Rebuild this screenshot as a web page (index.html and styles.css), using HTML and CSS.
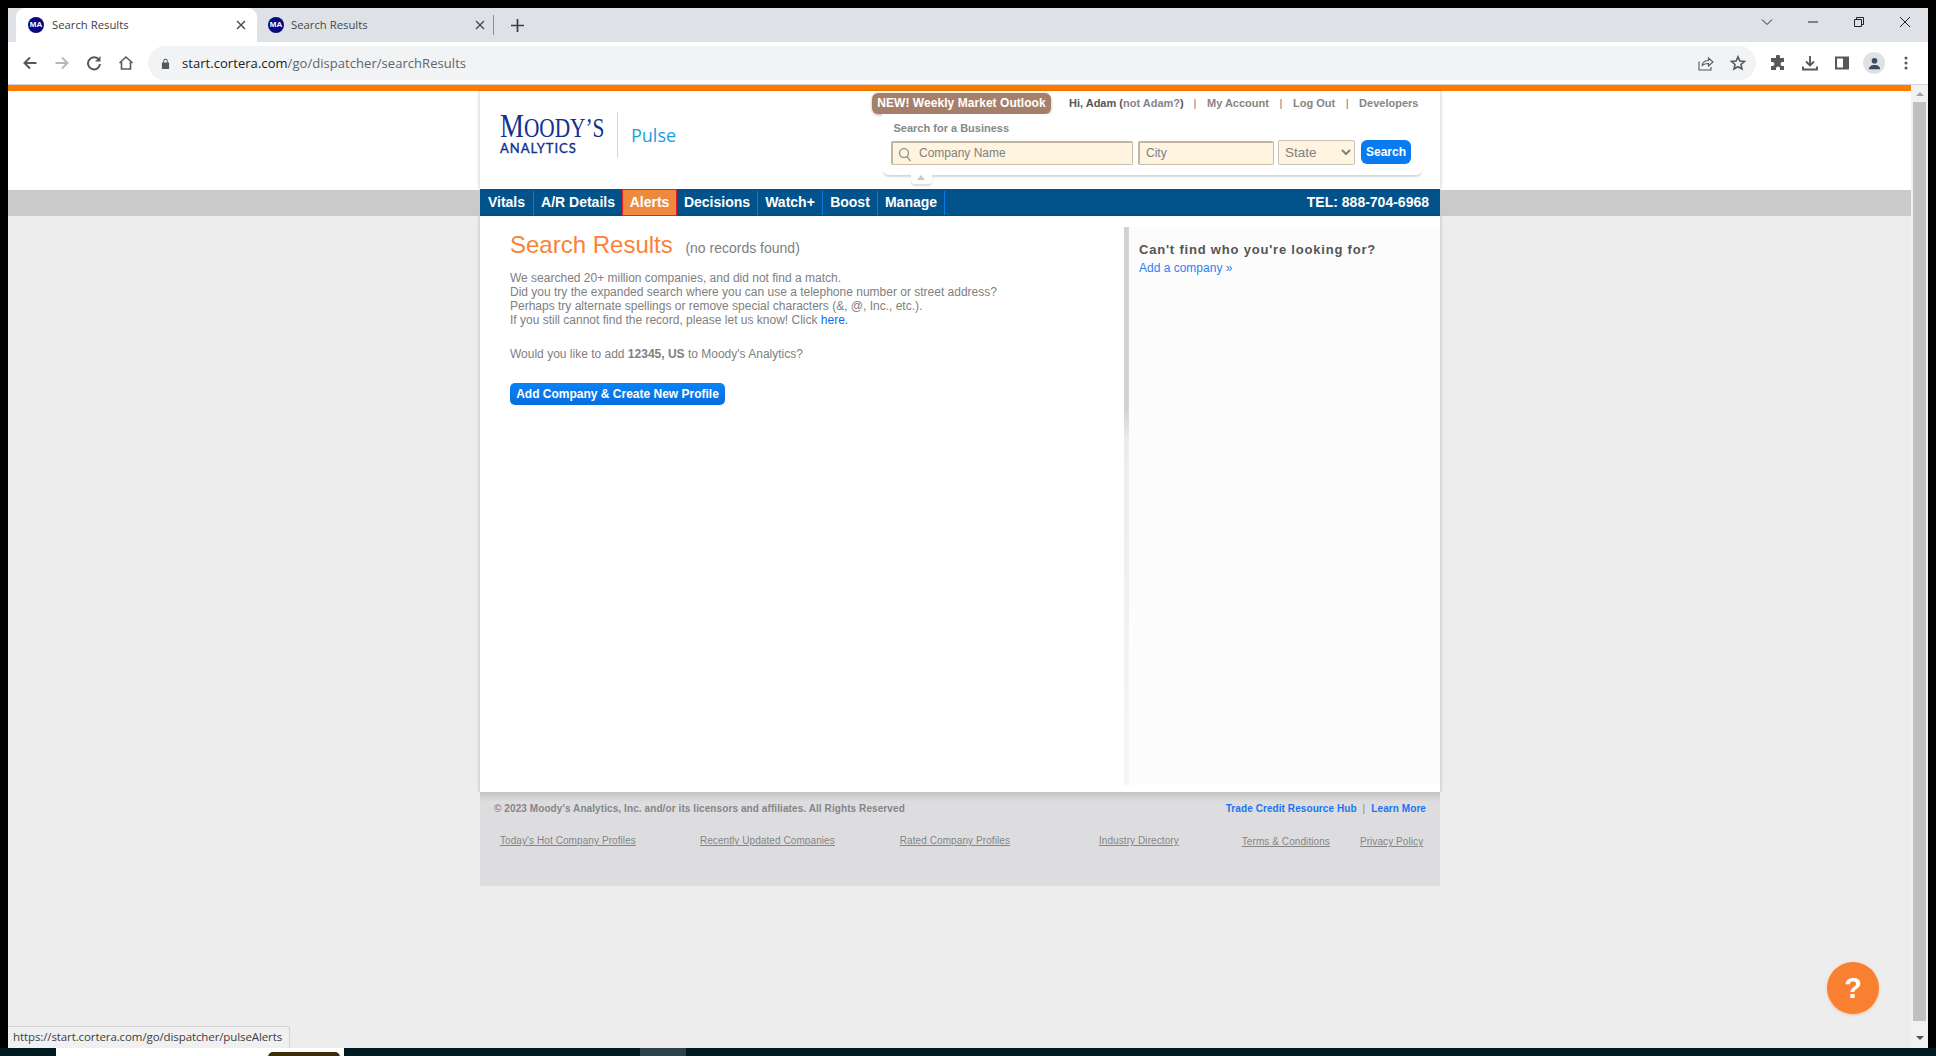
FILE: index.html
```html
<!DOCTYPE html>
<html lang="en">
<head>
<meta charset="utf-8">
<title>Search Results</title>
<link rel="stylesheet" href="styles.css">
</head>
<body>
<div class="window">
  <div class="tabstrip">
    <div class="tab tab-active">
      <span class="favicon">MA</span><span class="tab-title">Search Results</span>
      <svg class="tab-close" viewBox="0 0 10 10"><path d="M1 1l8 8M9 1l-8 8"/></svg>
    </div>
    <div class="tab tab-bg">
      <span class="favicon">MA</span><span class="tab-title">Search Results</span>
      <svg class="tab-close" viewBox="0 0 10 10"><path d="M1 1l8 8M9 1l-8 8"/></svg>
    </div>
    <span class="tab-sep"></span>
    <svg class="newtab" viewBox="0 0 12 12"><path d="M6 0v12M0 6h12"/></svg>
    <div class="winctl">
      <svg viewBox="0 0 12 12" class="wc"><path d="M1 3.5l5 5 5-5" fill="none"/></svg>
      <svg viewBox="0 0 12 12" class="wc"><path d="M1 6h10"/></svg>
      <svg viewBox="0 0 12 12" class="wc"><path d="M1.5 3.5h7v7h-7zM3.5 3.5v-2h7v7h-2" fill="none"/></svg>
      <svg viewBox="0 0 12 12" class="wc"><path d="M1 1l10 10M11 1L1 11"/></svg>
    </div>
  </div>

  <div class="toolbar">
    <svg class="ti ti-back" viewBox="0 0 16 16"><path class="s" d="M14.5 8H2.5M8 2.5L2.5 8 8 13.5"/></svg>
    <svg class="ti ti-fwd" viewBox="0 0 16 16"><path class="s faint" d="M1.5 8h12M8 2.5L13.5 8 8 13.5"/></svg>
    <svg class="ti ti-reload" viewBox="0 0 16 16"><path class="s" d="M13 5A6 6 0 1 0 14 9"/><path class="f" d="M14.5 1v5.5H9z"/></svg>
    <svg class="ti ti-home" viewBox="0 0 16 16"><path class="s thin" d="M1.5 8L8 2l6.500 6M3.500 7v7h9V7"/></svg>
    <div class="omnibox">
      <svg class="lock" viewBox="0 0 10 12"><path class="f" d="M1 5h8v7H1zM2.500 5V3.200a2.500 2.500 0 0 1 5 0V5H6.500V3.200a1.500 1.500 0 0 0-3 0V5z"/></svg>
      <span class="url"><span class="url-host">start.cortera.com</span>/go/dispatcher/searchResults</span>
      <svg class="om-ico om-share" viewBox="0 0 16 16"><path class="s thin1" d="M1 6.500V15h12v-3"/><path class="s thin1" d="M4 11c.5-3.500 3-5.500 6.500-5.500V3L15 7l-4.500 4V8.500C8 8.500 5.500 9 4 11z"/></svg>
      <svg class="om-ico om-star" viewBox="0 0 16 16"><path class="s thin" d="M8 1.800l1.900 4.200 4.500.5-3.400 3 1 4.500L8 11.700 4 14l1-4.500-3.400-3 4.500-.5z"/></svg>
    </div>
    <svg class="ti2" viewBox="0 0 16 16"><path class="f" d="M6 1.500a2 2 0 0 1 4 0V3h4v4h-1.500a2 2 0 0 0 0 4H14v4h-4v-1.500a2 2 0 0 0-4 0V15H1v-4h1.500a2 2 0 0 0 0-4H1V3h5z"/></svg>
    <svg class="ti2" viewBox="0 0 16 16"><path class="s dl" d="M8 1v9M4 6.500L8 10.500l4-4M1 11.500v3h14v-3"/></svg>
    <svg class="ti2" viewBox="0 0 16 16"><path class="f" fill-rule="evenodd" d="M1 1.500h14v13H1zM3 3.500v9h6v-9z"/></svg>
    <span class="avatar"><svg viewBox="0 0 16 16"><circle class="f" cx="8" cy="5" r="3"/><path class="f" d="M2 14c0-3 3-4.500 6-4.500s6 1.500 6 4.500z"/></svg></span>
    <svg class="ti2" viewBox="0 0 16 16"><circle class="f" cx="8" cy="3" r="1.500"/><circle class="f" cx="8" cy="8" r="1.500"/><circle class="f" cx="8" cy="13" r="1.500"/></svg>
  </div>

  <div class="browser-body">
    <div class="viewport">
      <div class="site">
        <header class="hdr">
          <div class="brand">
            <div class="logo">
              <div class="logo-moodys">M<span class="logo-sc">OODY’S</span></div>
              <div class="logo-analytics">ANALYTICS</div>
            </div>
            <div class="logo-pulse">Pulse</div>
          </div>
          <div class="hdr-right">
            <div class="toprow">
              <a class="btn-new">NEW! Weekly Market Outlook</a>
              <div class="toplinks">
                <span class="hi">Hi, Adam (<span class="muted">not Adam?</span>)</span>
                <span class="pipe">|</span><span>My Account</span>
                <span class="pipe">|</span><span>Log Out</span>
                <span class="pipe">|</span><span>Developers</span>
              </div>
            </div>
            <div class="searchpanel">
              <div class="search-label">Search for a Business</div>
              <div class="search-row">
                <div class="field field-company">
                  <svg class="mag" viewBox="0 0 14 15"><circle cx="6" cy="6" r="4.500"/><path d="M9 9.500l3.500 4.500"/></svg>
                  <span>Company Name</span>
                </div>
                <div class="field field-city"><span>City</span></div>
                <select class="field-state"><option>State</option></select>
                <a class="btn-search">Search</a>
              </div>
              <span class="notch"><span class="tri"></span></span>
            </div>
          </div>
        </header>

        <nav class="nav">
          <a class="nav-item w-vitals">Vitals</a>
          <a class="nav-item w-ar">A/R Details</a>
          <a class="nav-item nav-active">Alerts</a>
          <a class="nav-item w-dec">Decisions</a>
          <a class="nav-item w-watch">Watch+</a>
          <a class="nav-item w-boost">Boost</a>
          <a class="nav-item w-manage">Manage</a>
          <span class="tel">TEL: 888-704-6968</span>
        </nav>

        <main class="content">
          <section class="results">
            <h1 class="title">Search Results <small class="subtitle">(no records found)</small></h1>
            <p class="copy">We searched 20+ million companies, and did not find a match.<br>
            Did you try the expanded search where you can use a telephone number or street address?<br>
            Perhaps try alternate spellings or remove special characters (&amp;, @, Inc., etc.).<br>
            If you still cannot find the record, please let us know! Click <a class="blue">here.</a></p>
            <p class="copy copy-add">Would you like to add <b>12345, US</b> to Moody's Analytics?</p>
            <a class="btn-add">Add Company &amp; Create New Profile</a>
          </section>
          <aside class="side">
            <h2 class="side-title">Can't find who you're looking for?</h2>
            <a class="side-link">Add a company »</a>
          </aside>
        </main>

        <footer class="foot">
          <div class="foot-top">
            <span class="copyright">© 2023 Moody's Analytics, Inc. and/or its licensors and affiliates. All Rights Reserved</span>
            <span class="foot-hub">Trade Credit Resource Hub<span class="foot-pipe">|</span>Learn More</span>
          </div>
          <div class="foot-links">
            <a class="fl-a">Today's Hot Company Profiles</a>
            <a class="fl-b">Recently Updated Companies</a>
            <a class="fl-c">Rated Company Profiles</a>
            <a class="fl-d">Industry Directory</a>
            <a class="fl-e">Terms &amp; Conditions</a>
            <a class="fl-f">Privacy Policy</a>
          </div>
        </footer>
      </div>
    </div>
    <div class="scrollbar">
      <span class="arrow-up"></span>
      <span class="thumb"></span>
      <span class="arrow-down"></span>
    </div>
    <div class="status">https://start.cortera.com/go/dispatcher/pulseAlerts</div>
    <a class="help">?</a>
  </div>

  <div class="taskbar">
    <span class="tb-white"><span class="tb-brown"></span></span>
    <span class="tb-light"></span>
    <span class="tb-time">6:34 AM</span>
  </div>
</div>
</body>
</html>
```

FILE: styles.css
```css
* { box-sizing: border-box; }
html, body { margin: 0; height: 100%; overflow: hidden; background: #000; }
a { text-decoration: none; }

.window {
  height: 1056px;
  padding: 8px 8px 0;
  display: flex;
  flex-direction: column;
  font-family: "Liberation Sans", Arial, sans-serif;
  position: relative;
}

/* ---- browser chrome ---- */
.tabstrip {
  height: 34px;
  background: #dee1e6;
  display: flex;
  align-items: center;
  padding-left: 8px;
  font-family: "Open Sans", "Noto Sans", sans-serif;
  flex: none;
}
.tab {
  width: 241px;
  height: 34px;
  display: flex;
  align-items: center;
  padding: 0 11px 0 12px;
  color: #45494e;
  font-size: 11.3px;
}
.tab-bg { width: 239px; padding-left: 11px; }
.tab-bg .favicon { margin-right: 7px; }
.tab-active { background: #fff; border-radius: 9px 9px 0 0; color: #3c4043; }
.favicon {
  width: 16px; height: 16px;
  border-radius: 50%;
  background: #07077f;
  color: #fff;
  font: bold 8px/16px "Liberation Sans", sans-serif;
  text-align: center;
  flex: none;
  margin-right: 8px;
}
.tab-title { flex: 1; margin-top: -2px; }
.tab-close { width: 10px; height: 10px; stroke: #45494e; stroke-width: 1.4; flex: none; }
.tab-sep { width: 1px; height: 20px; background: #8d9196; margin-left: -3px; }
.newtab { width: 13px; height: 13px; stroke: #3c4043; stroke-width: 1.6; margin-left: 17px; }
.winctl { margin-left: auto; display: flex; gap: 34px; padding-right: 17px; margin-top: -6px; }
.wc { width: 12px; height: 12px; stroke: #222; stroke-width: 1; fill: none; }

.toolbar {
  height: 43px;
  background: #fff;
  border-bottom: 1px solid #d2d4d7;
  display: flex;
  align-items: center;
  flex: none;
  padding-left: 14px;
}
.s { fill: none; stroke: #55585d; stroke-width: 2; }
.s.thin { stroke-width: 1.6; }
.s.thin1 { stroke-width: 1.1; }
.s.faint { stroke: #b6b8bb; }
.s.dl { stroke-width: 1.9; }
.f { fill: #55585d; }
.ti { width: 16px; height: 16px; flex: none; }
.ti-fwd { margin-left: 16px; }
.ti-reload { margin-left: 16px; }
.ti-home { margin-left: 16px; }
.omnibox {
  width: 1608px;
  height: 34px;
  border-radius: 17px;
  background: #f1f3f4;
  margin-left: 14px;
  display: flex;
  align-items: center;
  padding-left: 13px;
  flex: none;
}
.lock { width: 9px; height: 11px; flex: none; }
.url {
  margin-left: 12px;
  font: 13px "Open Sans", "Noto Sans", sans-serif;
  letter-spacing: .05px;
  color: #5f6368;
}
.url-host { color: #202124; }
.om-ico { width: 16px; height: 16px; flex: none; }
.om-share { margin-left: auto; }
.om-star { margin: 0 10px 0 16px; }
.ti2 { width: 16px; height: 16px; flex: none; margin-left: 14px; }
.omnibox + .ti2 { margin-left: 14px; }
.ti2 + .ti2 { margin-left: 16px; }
.avatar {
  width: 22px; height: 22px;
  border-radius: 50%;
  background: #dee1e6;
  margin-left: 13px;
  display: flex;
  align-items: center;
  justify-content: center;
  flex: none;
}
.avatar svg { width: 15px; height: 15px; }
.avatar .f { fill: #3e4a5b; }
.avatar + .ti2 { margin-left: 13px; }

.browser-body { flex: 1; display: flex; position: relative; min-height: 0; }

/* ---- page ---- */
.viewport {
  width: 1903px;
  border-top: 6px solid #ff7a00;
  padding-left: 472px;
  background: linear-gradient(#fff 0 99px, #cacaca 99px 125px, #ededed 125px);
  flex: none;
}
.site {
  width: 960px;
  display: flex;
  flex-direction: column;
}
.hdr {
  height: 98px;
  background: #fff;
  display: flex;
  box-shadow: -2px 0 2px rgba(0,0,0,.1), 2px 0 2px rgba(0,0,0,.1);
}
.brand { display: flex; padding: 21px 0 0 20px; align-items: flex-start; }
.logo {
  width: 118px;
  height: 46px;
  border-right: 1px solid #d6d6d6;
}
.logo-moodys {
  font: 34px/28px "Liberation Serif", serif;
  color: #12308f;
  transform: scaleX(.79);
  transform-origin: left center;
  white-space: nowrap;
}
.logo-sc { font-size: 27px; }
.logo-analytics {
  font: 13px/13px "Lato", sans-serif;
  -webkit-text-stroke: .35px #12308f;
  color: #12308f;
  letter-spacing: .95px;
}
.logo-pulse {
  font: 18px/46px "Open Sans", sans-serif;
  color: #1a9fdc;
  margin-left: 13px;
}
.hdr-right { margin-left: auto; width: 568px; padding-top: 2px; }
.toprow { display: flex; align-items: center; height: 21px; }
.btn-new {
  width: 179px;
  height: 21px;
  border-radius: 6px;
  background: #a67f6b;
  box-shadow: 0 1px 3px rgba(0,0,0,.3);
  color: #fff;
  font: bold 12px/21px "Liberation Sans", sans-serif;
  letter-spacing: .05px;
  text-align: center;
  white-space: nowrap;
}
.toplinks {
  margin-left: 18px;
  display: flex;
  font: bold 11px/21px "Liberation Sans", sans-serif;
  color: #858585;
  white-space: nowrap;
}
.hi { color: #555; width: 114px; }
.muted { color: #858585; }
.pipe { font-weight: normal; width: 24px; text-align: center; color: #777; }
.searchpanel {
  margin: 0 0 0 10px;
  width: 541px;
  height: 61px;
  background: #fff;
  border-radius: 0 0 7px 7px;
  box-shadow: 0 3px 2px -1px rgba(0,0,0,.16);
  position: relative;
  padding: 7px 0 0 9px;
}
.search-label {
  font: bold 11px/14px "Liberation Sans", sans-serif;
  color: #888;
  padding-left: 2.5px;
}
.search-row { display: flex; align-items: flex-start; margin-top: 5px; }
.field {
  height: 24px;
  margin-top: 1px;
  padding-bottom: 2px;
  background: #fff4e0;
  border: 1px solid #c9bda8;
  border-top: 2px solid #c2b6a2;
  border-left: 2px solid #c2b6a2;
  border-radius: 2px;
  font: 12px/20px "Liberation Sans", sans-serif;
  color: #808080;
  display: flex;
  align-items: center;
}
.field-company { width: 242px; padding-left: 26px; position: relative; }
.mag {
  position: absolute;
  left: 5px; top: 4px;
  width: 14px; height: 15px;
  fill: none;
  stroke: #9a9a9a;
  stroke-width: 1.5;
}
.field-city { width: 136px; margin-left: 5px; padding-left: 6px; }
.field-state {
  width: 77px;
  height: 25px;
  margin-left: 4px;
  background: #fff4e0;
  border: 1px solid #c9c3b6;
  border-radius: 2px;
  color: #808080;
  font: 13.5px "Liberation Sans", sans-serif;
  padding-left: 2px;
}
.btn-search {
  width: 50px;
  height: 24px;
  margin-left: 6px;
  border-radius: 6px;
  background: #087bf0;
  color: #fff;
  font: bold 12px/25px "Liberation Sans", sans-serif;
  text-align: center;
}
.notch {
  position: absolute;
  left: 29px;
  top: 58px;
  width: 21px;
  height: 12px;
  background: #fff;
  border-radius: 0 0 4px 4px;
  box-shadow: 0 2px 2px rgba(0,0,0,.14);
}
.tri {
  position: absolute;
  left: 6px; top: 3px;
  border: 4px solid transparent;
  border-top: 0;
  border-bottom: 5px solid #c9c9c9;
}

/* nav */
.nav {
  height: 27px;
  background: #02538c;
  display: flex;
  align-items: stretch;
  font: bold 14px/26px "Liberation Sans", sans-serif;
  color: #fff;
}
.nav-item {
  color: #fff;
  text-align: center;
  position: relative;
  border-right: 1px solid #0b78e0;
  margin: 2px 0 1px;
  line-height: 22px;
}
.w-vitals { width: 54px; }
.w-ar { width: 88px; border-right: 0; }
.nav-active {
  width: 55px;
  margin: 0;
  line-height: 24px;
  background: #ed8a40;
  border: 1px solid #ec1c24;
}
.w-dec { width: 81px; }
.w-watch { width: 65px; }
.w-boost { width: 55px; }
.w-manage { width: 67px; }
.tel { margin-left: auto; padding-right: 11px; }

/* main */
.content {
  height: 576px;
  background: #fff;
  display: flex;
  align-items: flex-start;
  padding-top: 11px;
  box-shadow: -2px 0 2px rgba(0,0,0,.1), 2px 0 2px rgba(0,0,0,.1);
}
.results { width: 644px; padding: 4px 0 0 30px; }
.title {
  margin: 0;
  font: normal 24px/28px "Liberation Sans", sans-serif;
  color: #fb8236;
}
.subtitle { font-size: 14px; color: #808080; margin-left: 6px; }
.copy {
  margin: 9px 0 0;
  font: 12px/14px "Liberation Sans", sans-serif;
  color: #808080;
}
.copy-add { margin-top: 20px; }
.blue { color: #0a6cf0; }
.btn-add {
  display: block;
  margin-top: 22px;
  width: 215px;
  height: 22px;
  border-radius: 5px;
  background: linear-gradient(#0a82f5, #066ee0);
  color: #fff;
  font: bold 12px/22px "Liberation Sans", sans-serif;
  text-align: center;
}
.side {
  width: 316px;
  height: 558px;
  background:
    linear-gradient(90deg, rgba(0,0,0,.0), rgba(252,252,252,1)) 4px 0 / 5px 100% no-repeat,
    linear-gradient(#d2d2d2 0 180px, #ececec 215px, #f6f6f6) 0 0 / 5px 100% no-repeat,
    #fcfcfc;
  padding: 15px 0 0 15px;
}
.side-title {
  margin: 0;
  font: bold 13px/15px "Liberation Sans", sans-serif;
  letter-spacing: .8px;
  color: #555;
}
.side-link {
  display: block;
  margin-top: 4px;
  font: 12px/14px "Liberation Sans", sans-serif;
  color: #2f80f5;
}

/* footer */
.foot {
  height: 94px;
  background: linear-gradient(#c4c4c6, #dddde0 10px);
  padding: 10px 14px 0 14px;
  color: #858585;
}
.foot-top { display: flex; justify-content: space-between; align-items: flex-start; height: 17px; }
.copyright { font: bold 10px/14px "Liberation Sans", sans-serif; letter-spacing: .09px; }
.foot-hub {
  font: bold 10px/13px "Liberation Sans", sans-serif;
  color: #1a74f0;
  letter-spacing: .08px;
}
.foot-pipe { color: #858585; margin: 0 6px; font-weight: normal; }
.foot-links {
  position: relative;
  display: flex;
  margin-top: 15px;
  font: 10px/13px "Liberation Sans", sans-serif;
  letter-spacing: .08px;
  color: #858585;
}
.foot-links a { text-decoration: underline; white-space: nowrap; color: #858585; }
.fl-a { margin-left: 6px; }
.fl-b { margin-left: 64px; }
.fl-c { margin-left: 65px; }
.fl-d { margin-left: 89px; }
.fl-e { margin-left: 63px; padding-top: 1px; }
.fl-f { margin-left: 30px; padding-top: 1px; }

/* scrollbar */
.scrollbar {
  width: 17px;
  background: #f1f1f1;
  display: flex;
  flex-direction: column;
  align-items: center;
  flex: none;
}
.arrow-up, .arrow-down { border: 4px solid transparent; flex: none; }
.arrow-up { border-top: 0; border-bottom: 4px solid #a3a3a3; margin-top: 7px; }
.thumb { width: 13px; height: 919px; background: #c0c0c0; margin-top: 6px; }
.arrow-down { border-bottom: 0; border-top: 4px solid #505050; margin-top: 15px; }

.status {
  position: absolute;
  left: 0;
  bottom: 0;
  width: 282px;
  height: 22px;
  background: #f0f0f0;
  border: 1px solid #d4d4d4;
  border-left: 0;
  border-bottom: 0;
  border-radius: 0 3px 0 0;
  padding-left: 5px;
  font: 11.5px/20px "Open Sans", "Noto Sans", sans-serif;
  color: #3c4043;
  white-space: nowrap;
  letter-spacing: -.1px;
}
.help {
  position: absolute;
  left: 1819px;
  top: 877px;
  width: 52px;
  height: 52px;
  border-radius: 50%;
  background: #f98030;
  box-shadow: 0 1px 3px rgba(249,128,48,.4);
  color: #fff;
  font: bold 29px/52px "Liberation Sans", sans-serif;
  text-align: center;
}

/* taskbar */
.taskbar {
  height: 8px;
  margin: 0 -8px;
  background: #001a22;
  display: flex;
  overflow: hidden;
  position: relative;
  flex: none;
}
.tb-white { width: 288px; margin-left: 56px; background: #fff; position: relative; flex: none; }
.tb-brown {
  position: absolute;
  left: 212px; top: 4px;
  width: 72px; height: 10px;
  border-radius: 5px 5px 0 0;
  background: #3d2c0a;
}
.tb-light { width: 46px; margin-left: 296px; background: #2c414a; flex: none; }
.tb-time {
  margin-left: auto;
  margin-right: 71px;
  padding-top: 6px;
  font: 11px/14px "Open Sans", sans-serif;
  color: #fff;
}
```
